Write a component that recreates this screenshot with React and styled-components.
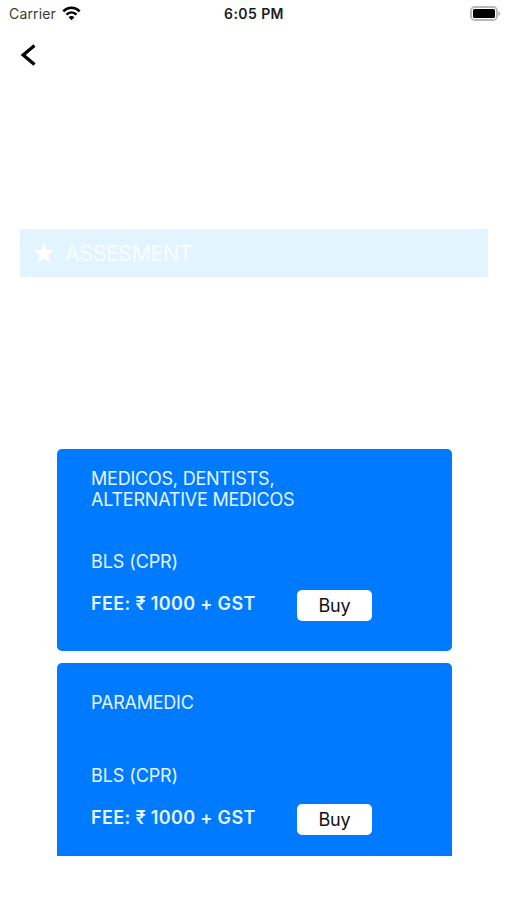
import React from 'react';
import styled, { createGlobalStyle } from "styled-components";

const GlobalStyle = createGlobalStyle`
  * {
    box-sizing: border-box;
  }
  body {
    margin: 0;
    background: #fff;
    font-family: Inter, "Liberation Sans", sans-serif;
  }
`;

const Screen = styled.div`
  display: flex;
  flex-direction: column;
  width: 507px;
  height: 900px;
  overflow: hidden;
  background: #fff;
`;

const StatusBar = styled.div`
  display: grid;
  grid-template-columns: 1fr auto 1fr;
  align-items: center;
  height: 27px;
  padding: 0 6px 0 9px;
`;

const Carrier = styled.div`
  display: flex;
  align-items: center;
  gap: 6px;
  color: #3a3a3a;
  font-size: 14px;
  letter-spacing: 0.15px;
`;

const Time = styled.div`
  margin-right: 2px;
  color: #1c1c1c;
  font-size: 14px;
  font-weight: 600;
  letter-spacing: 0.42px;
`;

const BatteryIcon = styled.svg`
  justify-self: end;
`;

const NavBar = styled.div`
  display: flex;
  align-items: center;
  height: 55px;
  padding-left: 20px;
`;

const BackButton = styled.button`
  display: flex;
  padding: 0;
  border: none;
  background: none;
`;

const Banner = styled.div`
  display: flex;
  align-items: center;
  gap: 10px;
  height: 48px;
  margin: 147px 19px 0 20px;
  padding-left: 13px;
  background: #e2f4ff;
  color: #fafdff;
  font-size: 21.5px;
  letter-spacing: -0.5px;
`;

const CardList = styled.div`
  display: flex;
  flex-direction: column;
  gap: 12px;
  height: 407px;
  margin: 172px 55.5px 0 56.5px;
  overflow: hidden;
`;

const Card = styled.div`
  flex: none;
  height: 202px;
  padding: 18.5px 35px 0 34.5px;
  border-radius: 5px;
  background: #007aff;
  color: #e6f5ff;
  font-size: 18px;
`;

const CardTitle = styled.div`
  display: flex;
  align-items: center;
  height: 43px;
  line-height: 21.5px;
  letter-spacing: -0.22px;
  white-space: pre-line;
`;

const Course = styled.div`
  margin-top: 40px;
  line-height: 22px;
  letter-spacing: -0.1px;
`;

const FeeRow = styled.div`
  display: flex;
  align-items: flex-start;
  justify-content: space-between;
  width: 281px;
  margin-top: 17.5px;
`;

const Fee = styled.div`
  line-height: 27px;
  font-weight: 600;
  letter-spacing: 0.35px;
`;

const BuyButton = styled.button`
  width: 75px;
  height: 31px;
  padding: 0;
  border: none;
  border-radius: 5px;
  background: #fff;
  color: #111;
  font-family: inherit;
  font-size: 18px;
  letter-spacing: -0.1px;
`;

const courses = [
    { title: "MEDICOS, DENTISTS,\nALTERNATIVE MEDICOS", course: "BLS (CPR)", fee: 1000 },
    { title: "PARAMEDIC", course: "BLS (CPR)", fee: 1000 },
];

function WifiIcon() {
    return (
        <svg width="19" height="15" viewBox="0 0 19 15" fill="none" stroke="#000" strokeWidth="2.6">
            <path d="M1.3 5.3C6 0.6 13 0.6 17.7 5.3" />
            <path d="M4.5 8.7C7.4 5.8 11.6 5.8 14.5 8.7" />
            <path d="M9.5 14.2L6.6 11.2C8.2 9.7 10.8 9.7 12.4 11.2Z" fill="#000" stroke="none" />
        </svg>
    );
}

function App() {
    return (
        <Screen>
            <GlobalStyle />
            <StatusBar>
                <Carrier>
                    <span>Carrier</span>
                    <WifiIcon />
                </Carrier>
                <Time>6:05 PM</Time>
                <BatteryIcon width="31" height="15" viewBox="0 0 31 15">
                    <rect x="1" y="1" width="26" height="13" rx="3.8" fill="#fff" stroke="#b9b9b9" strokeWidth="2" />
                    <rect x="3" y="3" width="22" height="9" rx="1.5" fill="#000" />
                    <path d="M28.4 5.2C30.9 6 30.9 9 28.4 9.8Z" fill="#b5b5b5" />
                </BatteryIcon>
            </StatusBar>
            <NavBar>
                <BackButton aria-label="Back">
                    <svg width="18" height="24" viewBox="0 0 18 24" fill="none" stroke="#000" strokeWidth="3.3">
                        <path d="M14.5 2.6L3.2 12L14.5 21.4" />
                    </svg>
                </BackButton>
            </NavBar>
            <Banner>
                <svg width="22" height="22" viewBox="0 0 21 21" fill="#fff">
                    <path d="M10.5 0.5L13.1 7.6L20.6 7.9L14.7 12.5L16.8 19.8L10.5 15.6L4.2 19.8L6.3 12.5L0.4 7.9L7.9 7.6Z" />
                </svg>
                <span>ASSESMENT</span>
            </Banner>
            <CardList>
                {courses.map((item) => (
                    <Card key={item.title}>
                        <CardTitle>{item.title}</CardTitle>
                        <Course>{item.course}</Course>
                        <FeeRow>
                            <Fee>FEE: ₹ {item.fee} + GST</Fee>
                            <BuyButton>Buy</BuyButton>
                        </FeeRow>
                    </Card>
                ))}
            </CardList>
        </Screen>
    );
}

export default App;
